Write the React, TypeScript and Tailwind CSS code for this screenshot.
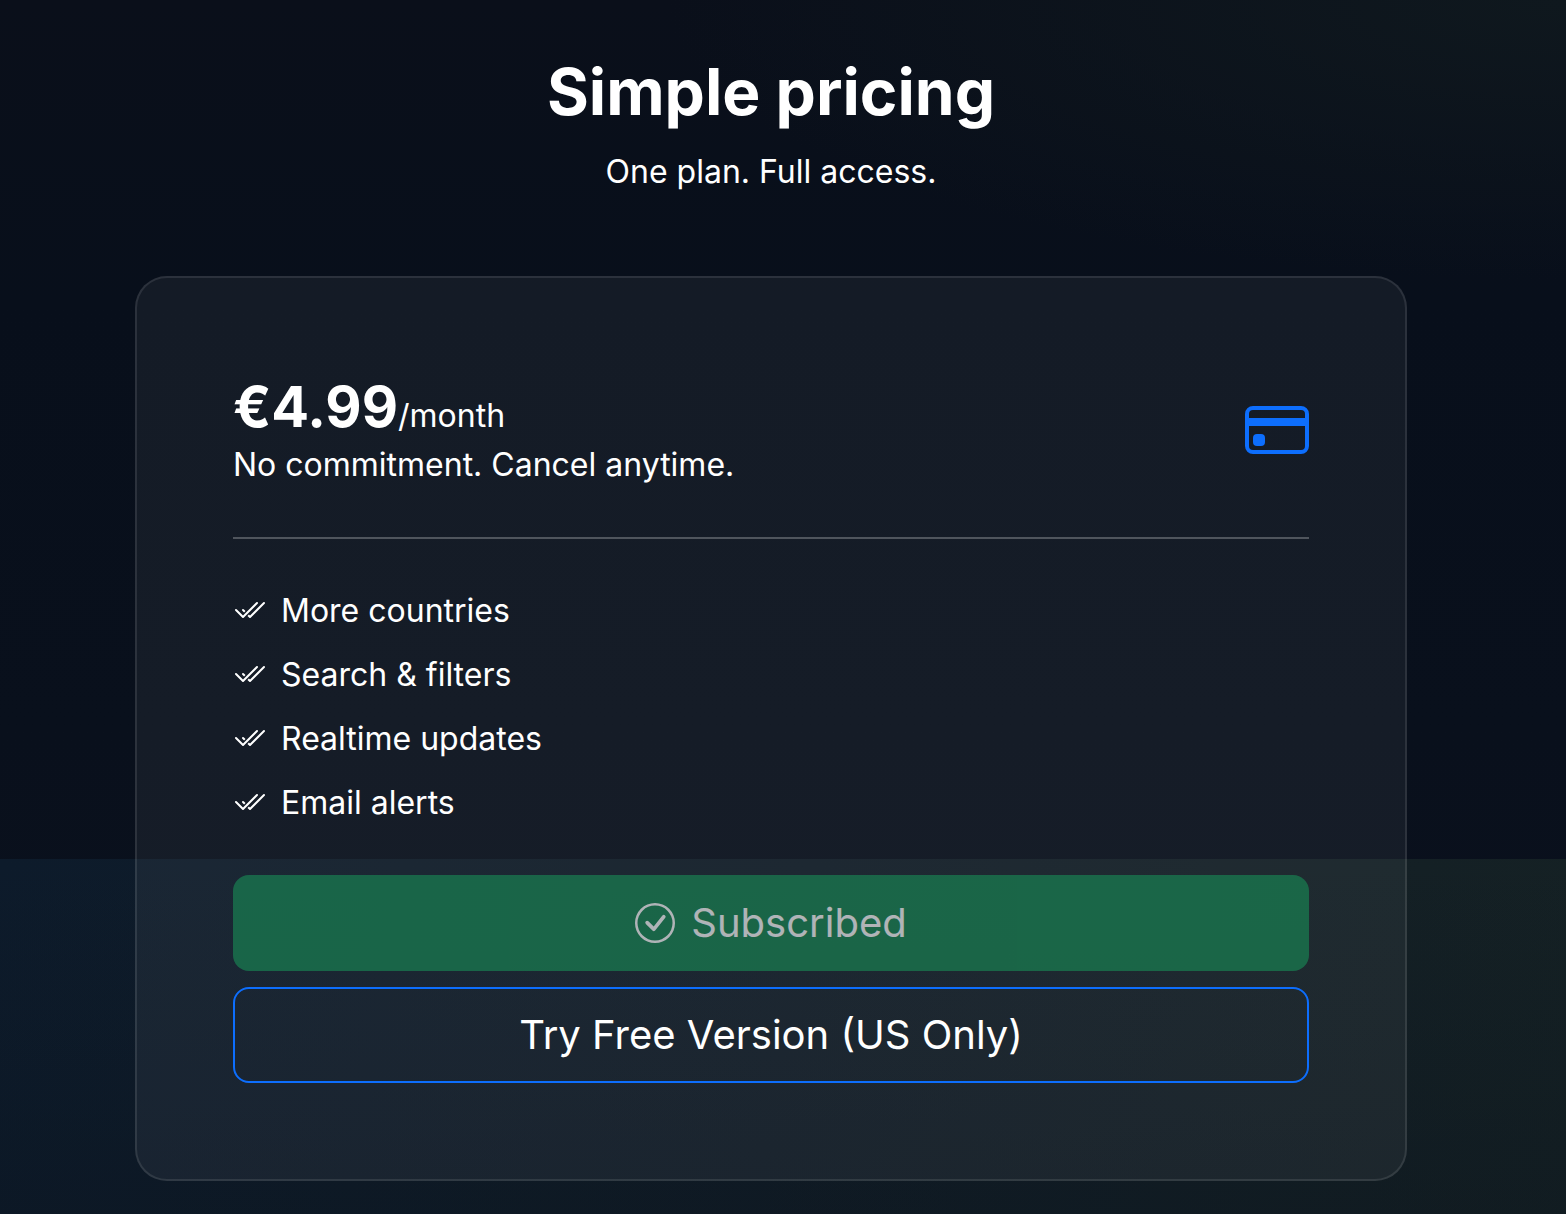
import React from 'react';
import { BsCheck2All, BsCheckCircle, BsCreditCard } from 'react-icons/bs';

const FEATURES = ['More countries', 'Search & filters', 'Realtime updates', 'Email alerts'];

const FeatureItem: React.FC<{ label: string }> = ({ label }) => (
    <li className="flex items-center gap-4">
        <BsCheck2All className="h-8 w-8 shrink-0" aria-hidden="true" />
        {label}
    </li>
);

const PricingCard: React.FC = () => (
    <article className="w-full rounded-[32px] border-2 border-white/10 bg-white/5 p-24">
        {/* Price */}
        <header className="flex items-start justify-between">
            <div>
                <h2 className="text-[56px] leading-[67px] font-bold">
                    €4.99<span className="text-[32px] leading-none font-normal">/month</span>
                </h2>
                <p>No commitment. Cancel anytime.</p>
            </div>
            <BsCreditCard className="mt-6 h-16 w-16 shrink-0 text-[#0d6efd]" aria-hidden="true" />
        </header>

        <hr className="my-12 border-t-2 border-white/25" />

        <ul className="mb-12 flex flex-col gap-4">
            {FEATURES.map(feature => (
                <FeatureItem key={feature} label={feature} />
            ))}
        </ul>

        {/* Actions */}
        <div className="flex flex-col gap-4">
            <button
                type="button"
                disabled
                className="flex h-24 items-center justify-center gap-4 rounded-2xl bg-[#198754] text-[40px] opacity-65"
            >
                <BsCheckCircle className="h-10 w-10 shrink-0" aria-hidden="true" />
                Subscribed
            </button>
            <button
                type="button"
                className="flex h-24 items-center justify-center rounded-2xl border-2 border-[#0d6efd] text-[40px]"
            >
                Try Free Version (US Only)
            </button>
        </div>
    </article>
);

export default function App() {
    return (
        <div className="relative isolate min-h-screen bg-[linear-gradient(to_bottom,#0a0f1a,#080f1b_25%,#09101c_60%,#0b111e)] font-['Inter',sans-serif] text-[32px] leading-[48px] text-white">
            {/* Background glows */}
            <div className="absolute inset-0 -z-10 bg-[radial-gradient(ellipse_900px_280px_at_100%_0,#0f181e,transparent)]" />
            <div className="absolute inset-x-0 top-[859px] bottom-0 -z-10 bg-[linear-gradient(to_bottom,transparent,#0a121c55),linear-gradient(100deg,#0d1b2b,#111d27_50%,#152124)]" />

            <main className="mr-6 flex flex-col items-center px-[135px] pt-14 pb-8">
                <h1 className="mb-5 text-center text-[64px] leading-[72px] font-bold">Simple pricing</h1>
                <p className="mb-20 text-center">One plan. Full access.</p>
                <PricingCard />
            </main>
        </div>
    );
}
